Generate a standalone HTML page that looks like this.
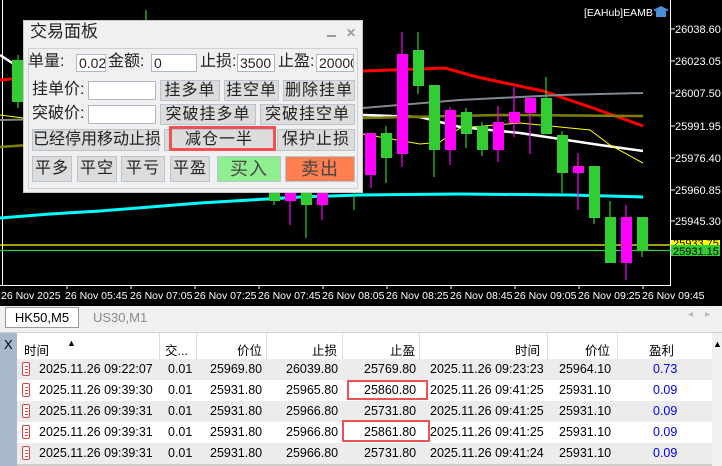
<!DOCTYPE html>
<html><head><meta charset="utf-8"><style>
*{margin:0;padding:0;box-sizing:border-box}
body{width:722px;height:466px;overflow:hidden;background:#fff;font-family:"Liberation Sans","Noto Sans CJK SC",sans-serif;position:relative}
.abs{position:absolute}
#panel{left:23px;top:20px;width:340px;height:173px;background:#f0f0f0;border:1px solid #c8c8c8}
#inner{left:4px;top:27px;width:330px;height:141px;border:1px solid #d0d0d0}
.lbl{position:absolute;font-size:16px;color:#222;line-height:20px;white-space:nowrap}
.inp{position:absolute;background:#fff;border:1px solid #a9b7c6;font-size:14px;color:#222;line-height:16px;padding-left:2px;overflow:hidden;white-space:nowrap}
.btn{position:absolute;background:#dcdcdc;border:1px solid #b8c4d0;font-size:16px;color:#222;text-align:center;white-space:nowrap;letter-spacing:1px}
.row{position:absolute;left:17px;width:695px;height:21px;font-size:12.5px;color:#000}
.row span{position:absolute;top:3px;white-space:nowrap}
.row i{position:absolute;left:5px;top:3px;width:8px;height:14px;border:1px solid #e04040;border-radius:2px;background:#fff}
.row i:before{content:"";position:absolute;left:2px;top:3px;width:3px;height:1px;background:#e04040;box-shadow:0 3px 0 #e04040,0 6px 0 #e04040}
.hdr span{position:absolute;top:7px;font-size:12.5px;white-space:nowrap}
</style></head><body>
<svg class="abs" style="left:0;top:0" width="722" height="306" viewBox="0 0 722 306">
<rect width="722" height="306" fill="#000"/>
<line x1="2.5" y1="0" x2="2.5" y2="286" stroke="#fff"/>
<line x1="670.5" y1="0" x2="670.5" y2="286" stroke="#fff"/>
<line x1="0" y1="285.5" x2="670" y2="285.5" stroke="#fff"/>
<g stroke="#fff"><line x1="67" y1="285" x2="67" y2="289"/><line x1="131" y1="285" x2="131" y2="289"/><line x1="195" y1="285" x2="195" y2="289"/><line x1="259" y1="285" x2="259" y2="289"/><line x1="323" y1="285" x2="323" y2="289"/><line x1="387" y1="285" x2="387" y2="289"/><line x1="451" y1="285" x2="451" y2="289"/><line x1="515" y1="285" x2="515" y2="289"/><line x1="579" y1="285" x2="579" y2="289"/><line x1="643" y1="285" x2="643" y2="289"/></g>
<g fill="#fff" font-family="Liberation Sans" font-size="10.5"><text x="1" y="299">26 Nov 2025</text><text x="65" y="299">26 Nov 05:45</text><text x="130" y="299">26 Nov 07:05</text><text x="194" y="299">26 Nov 07:25</text><text x="258" y="299">26 Nov 07:45</text><text x="322" y="299">26 Nov 08:05</text><text x="386" y="299">26 Nov 08:25</text><text x="450" y="299">26 Nov 08:45</text><text x="514" y="299">26 Nov 09:05</text><text x="578" y="299">26 Nov 09:25</text><text x="642" y="299">26 Nov 09:45</text></g>
<g stroke="#fff"><line x1="670" y1="29" x2="675" y2="29"/><line x1="670" y1="61" x2="675" y2="61"/><line x1="670" y1="93" x2="675" y2="93"/><line x1="670" y1="126" x2="675" y2="126"/><line x1="670" y1="158" x2="675" y2="158"/><line x1="670" y1="190" x2="675" y2="190"/><line x1="670" y1="221" x2="675" y2="221"/></g>
<g fill="#fff" font-family="Liberation Sans" font-size="11"><text x="675" y="33">26038.60</text><text x="675" y="65">26023.05</text><text x="675" y="97">26007.50</text><text x="675" y="130">25991.95</text><text x="675" y="162">25976.40</text><text x="675" y="194">25960.85</text><text x="675" y="225">25945.30</text></g>
<text x="584" y="16" fill="#fff" font-family="Liberation Sans" font-size="10.5">[EAHub]EAMB</text>
<path d="M653 10 L661 6 L669 10 L661 14Z" fill="#4a90d9"/><rect x="656" y="12" width="10" height="5" fill="#4a90d9"/>
<line x1="0" y1="245" x2="670" y2="245" stroke="#ffff00" stroke-width="1.3"/>
<line x1="0" y1="250.5" x2="670" y2="250.5" stroke="#32cd32" stroke-width="1.3"/>
<rect x="671" y="240" width="49" height="7" fill="#ffff00"/><text x="673" y="247" font-family="Liberation Sans" font-size="11" fill="#000">25933.75</text>
<rect x="671" y="245" width="49" height="11" fill="#32cd32"/><text x="673" y="255" font-family="Liberation Sans" font-size="11" fill="#000">25931.15</text>
<polyline points="0,80 23,78 100,75 200,72 300,70 363,71 420,69 445,68 477,77 543,91 593,108 643,126" fill="none" stroke="#ff0000" stroke-width="3"/>
<polyline points="0,120 100,118 200,116 300,112 363,108 460,100 560,95 643,93" fill="none" stroke="#808890" stroke-width="2"/>
<polyline points="0,55 23,70 200,100 300,112 363,115 420,117 460,127 520,133 600,145 643,151" fill="none" stroke="#fff" stroke-width="2.5"/>
<polyline points="0,147 100,140 200,130 300,122 363,118 500,115 643,116" fill="none" stroke="#808000" stroke-width="2.5"/>
<polyline points="0,115 100,128 200,135 300,138 363,134 420,144 440,142 460,128 520,123 590,130 610,145 643,163" fill="none" stroke="#ffff00" stroke-width="1"/>
<polyline points="0,218 50,214 100,211 150,207 200,203 250,200 300,197 360,195 460,194 570,195 643,197" fill="none" stroke="#00ffff" stroke-width="3"/>
<g stroke-width="1.2">
<line x1="18" y1="55" x2="18" y2="108" stroke="#32cd32"/><rect x="12" y="60" width="11" height="42" fill="#32cd32"/>
<line x1="146" y1="10" x2="146" y2="22" stroke="#32cd32"/>
<line x1="274" y1="190" x2="274" y2="205" stroke="#32cd32"/><rect x="269" y="193" width="11" height="8" fill="#32cd32"/>
<line x1="290" y1="190" x2="290" y2="225" stroke="#ff00ff"/><rect x="285" y="193" width="11" height="8" fill="#ff00ff"/>
<line x1="306" y1="190" x2="306" y2="238" stroke="#32cd32"/><rect x="301" y="193" width="11" height="12" fill="#32cd32"/>
<line x1="322" y1="190" x2="322" y2="220" stroke="#ff00ff"/><rect x="317" y="193" width="11" height="12" fill="#ff00ff"/>
<line x1="354" y1="190" x2="354" y2="210" stroke="#32cd32"/>
<line x1="371" y1="133" x2="371" y2="188" stroke="#ff00ff"/><rect x="365" y="133" width="11" height="42" fill="#ff00ff"/>
<line x1="386" y1="126" x2="386" y2="183" stroke="#32cd32"/><rect x="381" y="133" width="11" height="25" fill="#32cd32"/>
<line x1="402" y1="32" x2="402" y2="167" stroke="#ff00ff"/><rect x="397" y="54" width="11" height="100" fill="#ff00ff"/>
<line x1="418" y1="32" x2="418" y2="94" stroke="#32cd32"/><rect x="413" y="50" width="11" height="36" fill="#32cd32"/>
<line x1="434" y1="85" x2="434" y2="177" stroke="#32cd32"/><rect x="429" y="85" width="11" height="65" fill="#32cd32"/>
<line x1="450" y1="107" x2="450" y2="165" stroke="#ff00ff"/><rect x="445" y="110" width="11" height="40" fill="#ff00ff"/>
<line x1="466" y1="108" x2="466" y2="148" stroke="#32cd32"/><rect x="461" y="112" width="11" height="22" fill="#32cd32"/>
<line x1="482" y1="122" x2="482" y2="156" stroke="#32cd32"/><rect x="477" y="126" width="11" height="24" fill="#32cd32"/>
<line x1="498" y1="106" x2="498" y2="162" stroke="#ff00ff"/><rect x="493" y="122" width="11" height="28" fill="#ff00ff"/>
<line x1="514" y1="87" x2="514" y2="137" stroke="#ff00ff"/><rect x="509" y="112" width="11" height="11" fill="#ff00ff"/>
<line x1="530" y1="98" x2="530" y2="154" stroke="#ff00ff"/><rect x="525" y="98" width="11" height="15" fill="#ff00ff"/>
<line x1="546" y1="77" x2="546" y2="134" stroke="#32cd32"/><rect x="541" y="98" width="11" height="36" fill="#32cd32"/>
<line x1="562" y1="131" x2="562" y2="193" stroke="#32cd32"/><rect x="557" y="135" width="11" height="38" fill="#32cd32"/>
<line x1="578" y1="153" x2="578" y2="210" stroke="#ff00ff"/><rect x="573" y="166" width="11" height="7" fill="#ff00ff"/>
<line x1="594" y1="166" x2="594" y2="224" stroke="#32cd32"/><rect x="589" y="166" width="11" height="52" fill="#32cd32"/>
<line x1="610" y1="201" x2="610" y2="263" stroke="#32cd32"/><rect x="605" y="217" width="11" height="46" fill="#32cd32"/>
<line x1="626" y1="205" x2="626" y2="280" stroke="#ff00ff"/><rect x="621" y="217" width="11" height="46" fill="#ff00ff"/>
<line x1="642" y1="217" x2="642" y2="257" stroke="#32cd32"/><rect x="637" y="217" width="11" height="33" fill="#32cd32"/>
</g>
</svg>

<div id="panel" class="abs">
  <div class="lbl" style="left:6px;top:1px;font-size:17px">交易面板</div>
  <div class="abs" style="left:303px;top:14px;width:9px;height:2px;background:#999"></div>
  <div class="abs" style="left:322px;top:5px;font-size:12px;color:#999;font-weight:bold">✕</div>
  <div id="inner" class="abs"></div>
</div>
<div class="lbl" style="left:28px;top:52px">单量:</div>
<div class="inp" style="left:76px;top:54px;width:30px;height:18px">0.02</div>
<div class="lbl" style="left:108px;top:52px">金额:</div>
<div class="inp" style="left:151px;top:54px;width:46px;height:18px">0</div>
<div class="lbl" style="left:200px;top:52px">止损:</div>
<div class="inp" style="left:237px;top:54px;width:38px;height:18px">3500</div>
<div class="lbl" style="left:278px;top:52px">止盈:</div>
<div class="inp" style="left:316px;top:54px;width:38px;height:18px">20000</div>

<div class="lbl" style="left:32px;top:80px">挂单价:</div>
<div class="inp" style="left:88px;top:81px;width:68px;height:19px"></div>
<div class="btn" style="left:160px;top:80px;width:60px;height:21px;line-height:19px">挂多单</div>
<div class="btn" style="left:224px;top:80px;width:55px;height:21px;line-height:19px">挂空单</div>
<div class="btn" style="left:283px;top:80px;width:72px;height:21px;line-height:19px">删除挂单</div>

<div class="lbl" style="left:32px;top:104px">突破价:</div>
<div class="inp" style="left:88px;top:105px;width:68px;height:19px"></div>
<div class="btn" style="left:160px;top:104px;width:96px;height:21px;line-height:19px">突破挂多单</div>
<div class="btn" style="left:260px;top:104px;width:95px;height:21px;line-height:19px">突破挂空单</div>

<div class="btn" style="left:32px;top:129px;width:127px;height:22px;line-height:20px;letter-spacing:0">已经停用移动止损</div>
<div class="btn" style="left:164px;top:129px;width:110px;height:22px;line-height:20px">减仓一半</div>
<div class="abs" style="left:169px;top:126px;width:107px;height:25px;border:3px solid #f05050"></div>
<div class="btn" style="left:277px;top:129px;width:78px;height:22px;line-height:20px">保护止损</div>

<div class="btn" style="left:32px;top:156px;width:40px;height:26px;line-height:24px">平多</div>
<div class="btn" style="left:77px;top:156px;width:40px;height:26px;line-height:24px">平空</div>
<div class="btn" style="left:121px;top:156px;width:44px;height:26px;line-height:24px">平亏</div>
<div class="btn" style="left:170px;top:156px;width:40px;height:26px;line-height:24px">平盈</div>
<div class="btn" style="left:217px;top:156px;width:64px;height:26px;line-height:24px;background:#90ee90;font-size:18px;color:#444">买入</div>
<div class="btn" style="left:285px;top:156px;width:70px;height:26px;line-height:24px;background:#ff7f50;font-size:18px;color:#444">卖出</div>

<div class="abs" style="left:0;top:306px;width:722px;height:27px;background:#f0f0f0;border-bottom:1px solid #d0d0d0"></div>
<div class="abs" style="left:5px;top:307px;width:74px;height:21px;background:#fff;border:1px solid #999;font-size:13px;line-height:19px;text-align:center">HK50,M5</div>
<div class="abs" style="left:93px;top:310px;font-size:13px;color:#888">US30,M1</div>
<div class="abs" style="left:688px;top:309px;font-size:10px;color:#bbb">◂</div>
<div class="abs" style="left:705px;top:309px;font-size:10px;color:#bbb">▸</div>

<div class="abs" style="left:0;top:333px;width:17px;height:133px;background:#a9b9cc"></div>
<div class="abs" style="left:4px;top:337px;font-size:13px">X</div>
<div class="abs" style="left:712px;top:333px;width:10px;height:133px;background:#f0f0f0"></div>
<div class="abs" style="left:713px;top:339px;font-size:9px">▲</div>
<div class="abs hdr" style="left:17px;top:333px;width:695px;height:27px;background:#fff;border-bottom:1px solid #ddd">
  <span style="left:7px">时间</span><span style="left:50px;top:5px;font-size:9px">▲</span>
  <span style="left:148px">交...</span><span style="left:220px">价位</span><span style="left:295px">止损</span>
  <span style="left:373px">止盈</span><span style="left:498px">时间</span><span style="left:568px">价位</span><span style="left:632px">盈利</span>
</div>
<div class="abs" style="left:159px;top:333px;width:1px;height:27px;background:#ddd"></div>
<div class="abs" style="left:196px;top:333px;width:1px;height:27px;background:#ddd"></div>
<div class="abs" style="left:266px;top:333px;width:1px;height:27px;background:#ddd"></div>
<div class="abs" style="left:342px;top:333px;width:1px;height:27px;background:#ddd"></div>
<div class="abs" style="left:419px;top:333px;width:1px;height:27px;background:#ddd"></div>
<div class="abs" style="left:547px;top:333px;width:1px;height:27px;background:#ddd"></div>
<div class="abs" style="left:617px;top:333px;width:1px;height:27px;background:#ddd"></div>

<div class="row" style="top:359px;background:#ececec"><i></i><span style="left:22px">2025.11.26 09:22:07</span><span style="left:151px">0.01</span><span style="left:193px">25969.80</span><span style="left:269px">26039.80</span><span style="left:347px">25769.80</span><span style="left:413px">2025.11.26 09:23:23</span><span style="left:542px">25964.10</span><span style="left:636px;color:#0000ee">0.73</span></div>
<div class="row" style="top:380px;background:#fff"><i></i><span style="left:22px">2025.11.26 09:39:30</span><span style="left:151px">0.01</span><span style="left:193px">25931.80</span><span style="left:269px">25965.80</span><span style="left:347px">25860.80</span><span style="left:413px">2025.11.26 09:41:25</span><span style="left:542px">25931.10</span><span style="left:636px;color:#0000ee">0.09</span></div>
<div class="row" style="top:401px;background:#ececec"><i></i><span style="left:22px">2025.11.26 09:39:31</span><span style="left:151px">0.01</span><span style="left:193px">25931.80</span><span style="left:269px">25966.80</span><span style="left:347px">25731.80</span><span style="left:413px">2025.11.26 09:41:25</span><span style="left:542px">25931.10</span><span style="left:636px;color:#0000ee">0.09</span></div>
<div class="row" style="top:422px;background:#fff"><i></i><span style="left:22px">2025.11.26 09:39:31</span><span style="left:151px">0.01</span><span style="left:193px">25931.80</span><span style="left:269px">25966.80</span><span style="left:347px">25861.80</span><span style="left:413px">2025.11.26 09:41:25</span><span style="left:542px">25931.10</span><span style="left:636px;color:#0000ee">0.09</span></div>
<div class="row" style="top:443px;background:#ececec"><i></i><span style="left:22px">2025.11.26 09:39:31</span><span style="left:151px">0.01</span><span style="left:193px">25931.80</span><span style="left:269px">25966.80</span><span style="left:347px">25731.80</span><span style="left:413px">2025.11.26 09:41:24</span><span style="left:542px">25931.10</span><span style="left:636px;color:#0000ee">0.09</span></div>
<div class="abs" style="left:17px;top:464px;width:695px;height:2px;background:#ccc"></div>
<div class="abs" style="left:347px;top:380px;width:81px;height:20px;border:2px solid #f05050"></div>
<div class="abs" style="left:342px;top:420px;width:88px;height:22px;border:2px solid #f05050"></div>
</body></html>
